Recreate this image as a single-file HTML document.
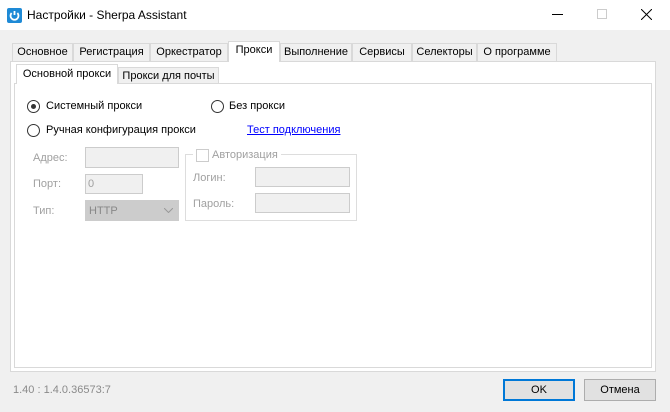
<!DOCTYPE html><html><head><meta charset="utf-8"><style>
*{box-sizing:border-box}body{margin:0;width:670px;height:412px;background:#f0f0f0;font:11px "Liberation Sans",sans-serif;position:relative;overflow:hidden;color:#000}
.a{position:absolute}
.tb{left:0;top:0;width:670px;height:30px;background:#fff}
.tab{position:absolute;border:1px solid #d9d9d9;border-bottom:none;background:#f0f0f0;height:19px;top:43px;text-align:center;line-height:17px;white-space:nowrap}
.sel{background:#fff;top:41px;height:21px;z-index:2}
.g{color:#a0a0a0}
.in{position:absolute;background:#f0f0f0;border:1px solid #ccc}
.r{position:absolute;width:13px;height:13px;border:1px solid #333;border-radius:50%;background:#fff}
</style></head><body>
<div class="a tb">
<svg class="a" style="left:7px;top:8px" width="15" height="15" viewBox="0 0 15 15"><rect width="15" height="15" rx="2" fill="#1e8ad6"/><path d="M7.5 3v4M4.6 5a4 4 0 1 0 5.8 0" stroke="#fff" stroke-width="1.8" fill="none"/></svg>
<div class="a" style="left:27px;top:8px;font-size:12px">Настройки - Sherpa Assistant</div>
<div class="a" style="left:552px;top:14px;width:11px;height:1px;background:#000"></div>
<div class="a" style="left:597px;top:9px;width:10px;height:10px;border:1px solid #ccc"></div>
<svg class="a" style="left:641px;top:9px" width="11" height="11"><path d="M0 0L11 11M11 0L0 11" stroke="#000"/></svg>
</div>
<div class="tab" style="left:12px;width:61px">Основное</div>
<div class="tab" style="left:73px;width:77px">Регистрация</div>
<div class="tab" style="left:150px;width:78px">Оркестратор</div>
<div class="tab sel" style="left:228px;width:52px">Прокси</div>
<div class="tab" style="left:280px;width:72px">Выполнение</div>
<div class="tab" style="left:352px;width:60px">Сервисы</div>
<div class="tab" style="left:412px;width:65px">Селекторы</div>
<div class="tab" style="left:477px;width:80px">О программе</div>
<div class="a" style="left:10px;top:61px;width:646px;height:311px;background:#fff;border:1px solid #d9d9d9"></div>
<div class="tab sel" style="left:16px;top:64px;width:102px;height:20px;line-height:18px">Основной прокси</div>
<div class="tab" style="left:118px;top:67px;width:101px;height:17px;line-height:16px">Прокси для почты</div>
<div class="a" style="left:14px;top:83px;width:638px;height:285px;border:1px solid #d9d9d9"></div>
<div class="r" style="left:27px;top:100px"><div class="a" style="left:3px;top:3px;width:5px;height:5px;border-radius:50%;background:#333"></div></div>
<div class="a" style="left:46px;top:100px">Системный прокси</div>
<div class="r" style="left:211px;top:100px"></div>
<div class="a" style="left:229px;top:100px">Без прокси</div>
<div class="r" style="left:27px;top:124px"></div>
<div class="a" style="left:46px;top:124px">Ручная конфигурация прокси</div>
<div class="a" style="left:247px;top:124px;color:#00f;text-decoration:underline">Тест подключения</div>
<div class="a g" style="left:33px;top:152px">Адрес:</div>
<div class="in" style="left:85px;top:147px;width:94px;height:21px"></div>
<div class="a g" style="left:33px;top:178px">Порт:</div>
<div class="in" style="left:85px;top:174px;width:58px;height:20px"></div>
<div class="a g" style="left:88px;top:178px">0</div>
<div class="a g" style="left:33px;top:205px">Тип:</div>
<div class="in" style="left:85px;top:200px;width:94px;height:21px;background:#ccc"></div>
<div class="a g" style="left:89px;top:205px;color:#888">HTTP</div>
<svg class="a" style="left:164px;top:208px" width="9" height="5"><path d="M0 0L4.5 4.5L9 0" stroke="#999" fill="none"/></svg>
<div class="a" style="left:185px;top:154px;width:172px;height:67px;border:1px solid #ddd"></div>
<div class="a" style="left:193px;top:147px;width:88px;height:15px;background:#fff"></div>
<div class="a" style="left:196px;top:149px;width:13px;height:13px;border:1px solid #ccc;background:#fff"></div>
<div class="a g" style="left:212px;top:149px">Авторизация</div>
<div class="a g" style="left:193px;top:172px">Логин:</div>
<div class="in" style="left:255px;top:167px;width:95px;height:20px"></div>
<div class="a g" style="left:193px;top:198px">Пароль:</div>
<div class="in" style="left:255px;top:193px;width:95px;height:20px"></div>
<div class="a" style="left:13px;top:384px;color:#8a8a8a">1.40 : 1.4.0.36573:7</div>
<div class="a" style="left:503px;top:379px;width:72px;height:22px;border:2px solid #0078d7;background:#e1e1e1;text-align:center;line-height:18px">OK</div>
<div class="a" style="left:584px;top:379px;width:72px;height:22px;border:1px solid #adadad;background:#e1e1e1;text-align:center;line-height:20px">Отмена</div>
</body></html>
